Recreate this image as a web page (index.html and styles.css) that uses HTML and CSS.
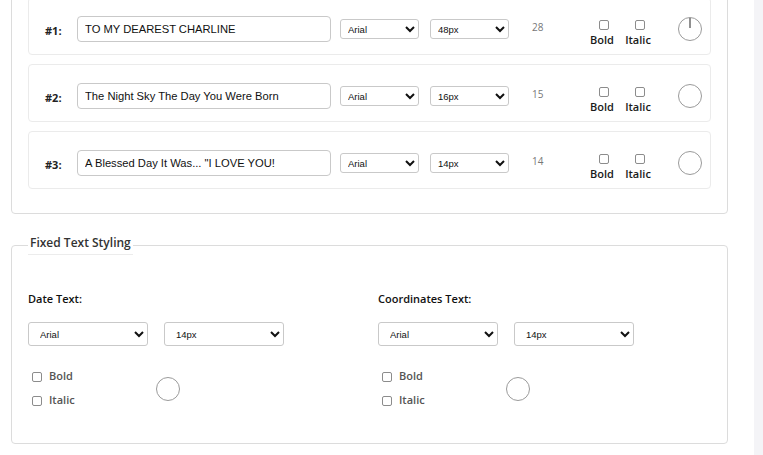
FILE: index.html
```html
<!DOCTYPE html>
<html lang="en">
<head>
<meta charset="utf-8">
<title>Text Styling</title>
<link rel="stylesheet" href="styles.css">
</head>
<body>
<div class="page">
  <main class="main">
    <section class="panel">
      <div class="card">
        <span class="num">#1:</span>
        <input class="text-input" type="text" value="TO MY DEAREST CHARLINE">
        <select class="sel sel-font"><option>Arial</option></select>
        <select class="sel sel-size"><option>48px</option></select>
        <span class="count">28</span>
        <div class="styles">
          <label class="style-opt"><input type="checkbox" class="cb"><span>Bold</span></label>
          <label class="style-opt"><input type="checkbox" class="cb"><span>Italic</span></label>
        </div>
        <svg class="dial" width="24" height="24" viewBox="0 0 24 24"><circle cx="12" cy="12" r="11.5" fill="#fff" stroke="#9a9a9a"/><line x1="12" y1="1" x2="12" y2="11" stroke="#222" stroke-width="1"/></svg>
      </div>
      <div class="card">
        <span class="num">#2:</span>
        <input class="text-input" type="text" value="The Night Sky The Day You Were Born">
        <select class="sel sel-font"><option>Arial</option></select>
        <select class="sel sel-size"><option>16px</option></select>
        <span class="count">15</span>
        <div class="styles">
          <label class="style-opt"><input type="checkbox" class="cb"><span>Bold</span></label>
          <label class="style-opt"><input type="checkbox" class="cb"><span>Italic</span></label>
        </div>
        <svg class="dial" width="24" height="24" viewBox="0 0 24 24"><circle cx="12" cy="12" r="11.5" fill="#fff" stroke="#9a9a9a"/></svg>
      </div>
      <div class="card">
        <span class="num">#3:</span>
        <input class="text-input" type="text" value="A Blessed Day It Was... &quot;I LOVE YOU!">
        <select class="sel sel-font"><option>Arial</option></select>
        <select class="sel sel-size"><option>14px</option></select>
        <span class="count">14</span>
        <div class="styles">
          <label class="style-opt"><input type="checkbox" class="cb"><span>Bold</span></label>
          <label class="style-opt"><input type="checkbox" class="cb"><span>Italic</span></label>
        </div>
        <svg class="dial" width="24" height="24" viewBox="0 0 24 24"><circle cx="12" cy="12" r="11.5" fill="#fff" stroke="#9a9a9a"/></svg>
      </div>
    </section>

    <fieldset class="fixed">
      <legend class="fixed-legend">Fixed Text Styling</legend>
      <div class="fixed-grid">
        <div class="fixed-col">
          <div class="fixed-title">Date Text:</div>
          <div class="sel-row">
            <select class="sel-lg"><option>Arial</option></select>
            <select class="sel-lg"><option>14px</option></select>
          </div>
          <div class="opt-row">
            <div class="checks">
              <label class="check"><input type="checkbox" class="cb"><span>Bold</span></label>
              <label class="check"><input type="checkbox" class="cb"><span>Italic</span></label>
            </div>
            <svg class="dial-lg" width="24" height="24" viewBox="0 0 24 24"><circle cx="12" cy="12" r="11.5" fill="#fff" stroke="#9a9a9a"/></svg>
          </div>
        </div>
        <div class="fixed-col">
          <div class="fixed-title">Coordinates Text:</div>
          <div class="sel-row">
            <select class="sel-lg"><option>Arial</option></select>
            <select class="sel-lg"><option>14px</option></select>
          </div>
          <div class="opt-row">
            <div class="checks">
              <label class="check"><input type="checkbox" class="cb"><span>Bold</span></label>
              <label class="check"><input type="checkbox" class="cb"><span>Italic</span></label>
            </div>
            <svg class="dial-lg" width="24" height="24" viewBox="0 0 24 24"><circle cx="12" cy="12" r="11.5" fill="#fff" stroke="#9a9a9a"/></svg>
          </div>
        </div>
      </div>
    </fieldset>
  </main>
  <div class="scrollbar"></div>
</div>
</body>
</html>
```

FILE: styles.css
```css
* { box-sizing: border-box; }

html, body {
  margin: 0;
  padding: 0;
  background: #fff;
  font-family: "Open Sans", "Liberation Sans", Arial, sans-serif;
  color: #222;
}

.page {
  display: flex;
  height: 455px;
  overflow: hidden;
}

.main {
  flex: 1;
  padding: 0 26px 0 11px;
}

.scrollbar {
  width: 9px;
  flex: none;
  background: #f4f4f7;
}

/* ---- top panel with cards ---- */
.panel {
  margin-top: -20px;
  border: 1px solid #dcdcdc;
  border-radius: 4px;
  padding: 16px 16px 24px;
  display: flex;
  flex-direction: column;
  gap: 9px;
}

.card {
  height: 58px;
  border: 1px solid #ebebeb;
  border-radius: 4px;
  padding-left: 16px;
  display: flex;
  align-items: flex-start;
}

.num {
  width: 32px;
  margin-top: 25px;
  font-size: 11px;
  line-height: 16px;
  font-weight: 700;
  color: #222;
}

.text-input {
  width: 254px;
  height: 26px;
  margin: 18px 0 0;
  border: 1px solid #c9c9c9;
  border-radius: 4px;
  padding: 0 7px;
  font-family: "Liberation Sans", Arial, sans-serif;
  font-size: 11.2px;
  color: #111;
  background: #fff;
  outline: none;
}

.sel {
  width: 79px;
  height: 20px;
  margin: 21px 0 0;
  border: 1px solid #c9c9c9;
  border-radius: 3px;
  background: #fff;
  padding: 0 3px;
  font-family: "Liberation Sans", Arial, sans-serif;
  font-size: 9.5px;
  color: #111;
}

.sel-font { margin-left: 9px; }
.sel-size { margin-left: 11px; }

.count {
  width: 20px;
  margin: 22px 0 0 23px;
  font-size: 10px;
  line-height: 14px;
  color: #777;
}

.styles {
  display: flex;
  gap: 10px;
  margin: 22px 0 0 37px;
}

.style-opt {
  width: 26px;
  display: flex;
  flex-direction: column;
  align-items: center;
  font-size: 11px;
  line-height: 15px;
  font-weight: 600;
  color: #1a1a1a;
}

.style-opt .cb { margin: 0 0 0 4px; }
.style-opt span { margin-top: 2px; }

.cb {
  appearance: none;
  -webkit-appearance: none;
  width: 10px;
  height: 10px;
  border: 1px solid #8c8c8c;
  border-radius: 2px;
  background: #fff;
  margin: 0;
  flex: none;
}

.dial {
  margin: 19px 0 0 27px;
  flex: none;
}

/* ---- fixed text styling ---- */
.fixed {
  margin: 21px 0 0;
  border: 1px solid #dcdcdc;
  border-radius: 4px;
  padding: 36px 16px 30px;
  min-width: 0;
}

.fixed-legend {
  padding: 0 2px 3px;
  border-bottom: 1px solid #ececec;
  font-size: 12px;
  line-height: 16px;
  font-weight: 600;
  color: #333;
}

.fixed-grid {
  display: grid;
  grid-template-columns: 350px 1fr;
}

.fixed-title {
  font-size: 11px;
  line-height: 15px;
  font-weight: 600;
  color: #111;
}

.sel-row {
  display: flex;
  gap: 16px;
  margin-top: 16px;
}

.sel-lg {
  width: 120px;
  height: 24px;
  border: 1px solid #c9c9c9;
  border-radius: 3px;
  background: #fff;
  padding: 0 7px;
  font-family: "Liberation Sans", Arial, sans-serif;
  font-size: 9.5px;
  color: #111;
}

.opt-row {
  display: flex;
  align-items: center;
  margin-top: 19px;
}

.checks {
  width: 128px;
  display: flex;
  flex-direction: column;
}

.check {
  height: 24px;
  display: flex;
  align-items: center;
  gap: 7px;
  padding-left: 4px;
  font-size: 11px;
  font-weight: 600;
  color: #555;
}

.check span { margin-top: -4px; }

.dial-lg { flex: none; }
```
